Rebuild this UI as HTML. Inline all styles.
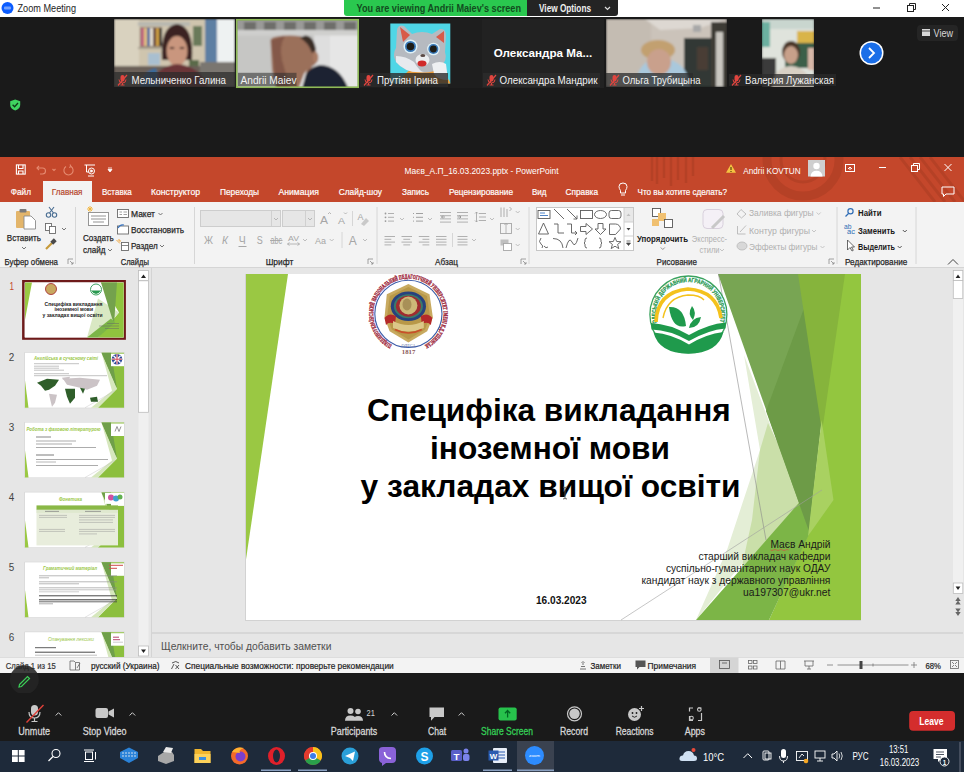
<!DOCTYPE html>
<html><head><meta charset="utf-8"><title>Zoom Meeting</title>
<style>
*{margin:0;padding:0}
html,body{width:964px;height:772px;overflow:hidden;background:#1a1a1a}
svg{display:block;font-family:"Liberation Sans",sans-serif}
</style></head><body>
<svg width="964" height="772" viewBox="0 0 964 772">
<rect x="0" y="0" width="964" height="772" fill="#1a1a1a"/>
<rect x="0" y="0" width="964" height="17" fill="#ffffff"/>
<circle cx="7.5" cy="8" r="6" fill="#0b5cff"/>
<rect x="4" y="6.5" width="7" height="3" rx="1" fill="#9fc0ff" opacity="0.7"/>
<text x="17.5" y="12" font-size="10.5" fill="#1d1d1d" textLength="58.5" lengthAdjust="spacingAndGlyphs">Zoom Meeting</text>
<path d="M344 0 H527 V16 H347 Q344 16 344 13 Z" fill="#2ac84f"/>
<text x="356.5" y="11.5" font-size="10" fill="#124d20" font-weight="bold" textLength="164.5" lengthAdjust="spacingAndGlyphs">You are viewing Andrii Maiev's screen</text>
<path d="M527 0 H618 V13 Q618 16 615 16 H527 Z" fill="#242424"/>
<text x="539" y="11.5" font-size="10" fill="#f0f0f0" font-weight="bold" textLength="52" lengthAdjust="spacingAndGlyphs">View Options</text>
<path d="M605 7 L607.5 9.5 L610 7" stroke="#ddd" stroke-width="1.2" fill="none"/>
<path d="M873 8 H880" stroke="#222" stroke-width="1"/>
<rect x="907.5" y="5.5" width="6" height="6" fill="none" stroke="#222" stroke-width="1"/><path d="M909.5 5.5 V3.5 H915.5 V9.5 H913.5" fill="none" stroke="#222" stroke-width="1"/>
<path d="M942 4 L949 11 M949 4 L942 11" stroke="#222" stroke-width="1"/>
<path d="M15.2 99.5 L20.2 101.3 V105 Q20.2 108.6 15.2 110.5 Q10.2 108.6 10.2 105 V101.3 Z" fill="#3fd460"/>
<path d="M12.6 104.8 L14.6 106.8 L18 103" stroke="#0f3a18" stroke-width="1.3" fill="none"/>
<defs><filter id="bl" x="-5%" y="-5%" width="110%" height="110%"><feGaussianBlur stdDeviation="1.3"/></filter><filter id="bl2"><feGaussianBlur stdDeviation="0.5"/></filter><clipPath id="c1"><rect x="114" y="19" width="121" height="68"/></clipPath><clipPath id="c2"><rect x="236" y="19" width="123" height="69"/></clipPath><clipPath id="c3"><rect x="390.3" y="23.5" width="60" height="60"/></clipPath><clipPath id="c5"><rect x="606" y="19" width="121" height="68"/></clipPath><clipPath id="c6"><rect x="762" y="19" width="52" height="68"/></clipPath></defs>
<g clip-path="url(#c1)"><g filter="url(#bl)"><rect x="114" y="19" width="121" height="68" fill="#cfc5ae"/><rect x="114" y="19" width="25" height="68" fill="#d9d2bf"/><rect x="138" y="22" width="52" height="4" fill="#b8b8b0"/><rect x="140" y="27" width="22" height="20" fill="#8a7a6a"/><rect x="141" y="28" width="3" height="18" fill="#c06080"/><rect x="144" y="28" width="3" height="18" fill="#e0c080"/><rect x="147" y="28" width="3" height="18" fill="#4a6aa0"/><rect x="150" y="28" width="3" height="18" fill="#e8e0d0"/><rect x="153" y="28" width="3" height="18" fill="#604040"/><rect x="156" y="28" width="3" height="18" fill="#d0a040"/><rect x="159" y="28" width="3" height="18" fill="#303030"/><rect x="138" y="47" width="55" height="2" fill="#a8a090"/><rect x="148" y="53" width="12" height="12" fill="#a9bfd0"/><rect x="205" y="19" width="12" height="60" fill="#5d7fa3"/><rect x="217" y="19" width="18" height="58" fill="#eef2f2"/><rect x="193" y="26" width="9" height="20" fill="#6a7a5a"/><rect x="189" y="60" width="10" height="12" fill="#5a6a4a"/><rect x="114" y="66" width="121" height="21" fill="#6a6058"/><rect x="200" y="62" width="35" height="25" fill="#7a7670"/><path d="M162 60 Q160 26 177 24 Q194 26 192 60 Z" fill="#3a2420"/><ellipse cx="177" cy="51" rx="10.5" ry="15" fill="#c9967e"/><path d="M150 87 Q156 66 177 64 Q200 66 208 87 Z" fill="#6a3438"/><path d="M140 87 Q144 70 156 68 L160 87 Z" fill="#3a6a9a"/><ellipse cx="172" cy="48" rx="2.5" ry="1" fill="#3a2420"/><ellipse cx="182" cy="48" rx="2.5" ry="1" fill="#3a2420"/></g></g>
<rect x="114" y="72" width="121" height="15" fill="#2b2b2b" opacity="0.72"/>
<g transform="translate(118,75)"><rect x="2.5" y="0" width="4" height="6.5" rx="2" fill="#e0453f"/><path d="M1 4.5 Q1 8 4.5 8 Q8 8 8 4.5 M4.5 8 V10 M2.5 10 H6.5" stroke="#e0453f" stroke-width="1" fill="none"/><path d="M0 10.5 L9 0" stroke="#e0453f" stroke-width="1.2"/></g>
<text x="131.5" y="84" font-size="10" fill="#f2f2f2" textLength="94.5" lengthAdjust="spacingAndGlyphs">Мельниченко Галина</text>
<g clip-path="url(#c2)"><g filter="url(#bl)"><rect x="236" y="19" width="123" height="69" fill="#c6c6c4"/><rect x="314" y="35" width="45" height="53" fill="#dedede"/><rect x="330" y="35" width="29" height="53" fill="#e6e6e6"/><rect x="236" y="19" width="123" height="12" fill="#9a9a98"/><rect x="244" y="22" width="12" height="8" fill="#6e6e6a"/><rect x="264" y="22" width="12" height="8" fill="#6e6e6a"/><rect x="284" y="22" width="12" height="8" fill="#6e6e6a"/><rect x="304" y="22" width="12" height="8" fill="#6e6e6a"/><rect x="324" y="22" width="12" height="8" fill="#6e6e6a"/><rect x="344" y="22" width="12" height="8" fill="#6e6e6a"/><rect x="236" y="30" width="123" height="5.5" fill="#cfcfcd"/><path d="M270.5 40 Q272 35.5 290 35.5 Q312 35.5 315 48 L317.5 56 Q318 64 312 66 L306 84 L298 88 L276 88 L272 70 Z" fill="#9b6f5a"/><path d="M271 40 L276 88 L290 88 L282 60 Q279 45 285 36 Z" fill="#7a5040" opacity="0.7"/><path d="M305 35.5 Q314 36 316 50 L312 53 Q308 42 300 38 Z" fill="#3a2e28"/><ellipse cx="315.5" cy="57.5" rx="2.8" ry="5" fill="#a87a62"/><path d="M300 88 Q304 68 320 65 Q340 66 348 88 Z" fill="#1f2432"/><path d="M304 74 L307 70 L302 88 L299 88 Z" fill="#e8e8e8"/></g></g>
<rect x="238" y="72.8" width="58.5" height="13.2" fill="#2b2b2b" opacity="0.55"/>
<rect x="236.75" y="19.75" width="121.5" height="67.5" fill="none" stroke="#8fba58" stroke-width="1.6"/>
<text x="240.5" y="84" font-size="10" fill="#f2f2f2" textLength="56" lengthAdjust="spacingAndGlyphs">Andrii Maiev</text>
<rect x="359" y="19" width="123" height="69" fill="#1e1e1e"/>
<rect x="390.3" y="23.5" width="60" height="60" fill="#4fd6e6"/>
<g clip-path="url(#c3)"><g filter="url(#bl2)"><path d="M400 84 Q404 68 422 67 Q444 68 451 84 Z" fill="#e89a3a"/><path d="M397 30 Q398 24 404 26 L412 34 Q422 30 432 34 L440 29 Q446 28 446 36 L445 52 Q448 60 440 68 Q430 74 420 72 Q404 72 396 62 Q392 54 396 48 Z" fill="#b6bac0"/><path d="M400 27 L410 35 L403 42 Z" fill="#d85a4a"/><path d="M444 31 L436 37 L444 43 Z" fill="#d85a4a"/><path d="M396 56 Q406 56 414 62 Q420 72 424 72 Q406 74 396 62 Z" fill="#e8eaee"/><path d="M432 64 Q440 60 446 64 L448 80 Q438 80 434 74 Z" fill="#eef0f2"/><ellipse cx="422.5" cy="60" rx="7" ry="6" fill="#eceef0"/><circle cx="410.5" cy="46.5" r="7" fill="#dff2f8"/><circle cx="410.5" cy="46.5" r="5.5" fill="#3a7ab8"/><circle cx="410.5" cy="46.5" r="3.8" fill="#1e1a16"/><circle cx="433.4" cy="49" r="6.3" fill="#dff2f8"/><circle cx="433.4" cy="49" r="5" fill="#3a7ab8"/><circle cx="433.4" cy="49" r="3.4" fill="#1e1a16"/><ellipse cx="422.8" cy="55.5" rx="2.5" ry="1.6" fill="#5a4a44"/><ellipse cx="422" cy="63.5" rx="4.5" ry="3" fill="#d02a2a"/></g></g>
<rect x="360" y="73" width="88" height="14" fill="#2b2b2b" opacity="0.8"/>
<g transform="translate(364,75)"><rect x="2.5" y="0" width="4" height="6.5" rx="2" fill="#e0453f"/><path d="M1 4.5 Q1 8 4.5 8 Q8 8 8 4.5 M4.5 8 V10 M2.5 10 H6.5" stroke="#e0453f" stroke-width="1" fill="none"/><path d="M0 10.5 L9 0" stroke="#e0453f" stroke-width="1.2"/></g>
<text x="377" y="84" font-size="10" fill="#f2f2f2" textLength="61" lengthAdjust="spacingAndGlyphs">Прутіян Ірина</text>
<rect x="482" y="19" width="122" height="69" fill="#222222"/>
<text x="493.7" y="57.2" font-size="10.8" fill="#ffffff" font-weight="bold" textLength="98.5" lengthAdjust="spacingAndGlyphs">Олександра  Ма...</text>
<rect x="483" y="73" width="117" height="14" fill="#2a2a2a"/>
<g transform="translate(487,75)"><rect x="2.5" y="0" width="4" height="6.5" rx="2" fill="#e0453f"/><path d="M1 4.5 Q1 8 4.5 8 Q8 8 8 4.5 M4.5 8 V10 M2.5 10 H6.5" stroke="#e0453f" stroke-width="1" fill="none"/><path d="M0 10.5 L9 0" stroke="#e0453f" stroke-width="1.2"/></g>
<text x="499.5" y="84" font-size="10" fill="#f2f2f2" textLength="98" lengthAdjust="spacingAndGlyphs">Олександра Мандрик</text>
<g clip-path="url(#c5)"><g filter="url(#bl)"><rect x="606" y="19" width="121" height="68" fill="#cbc3ba"/><rect x="606" y="19" width="45" height="68" fill="#c4bcb2"/><path d="M645 19 L660 30 L700 28 L727 19 Z" fill="#ddd8d2"/><rect x="684" y="38" width="27" height="49" fill="#323836"/><rect x="697" y="47" width="11" height="23" fill="#4a3e34"/><rect x="711" y="22" width="16" height="65" fill="#3e3a36"/><rect x="716" y="32" width="7" height="55" fill="#c9c6c0"/><rect x="693" y="25" width="8" height="7" fill="#a8a8a8"/><path d="M636 87 Q636 60 660 58 Q688 60 690 87 Z" fill="#a9c8dc"/><ellipse cx="658" cy="50" rx="17" ry="10" fill="#c2a070"/><ellipse cx="659" cy="62" rx="12" ry="13" fill="#c9a08c"/></g></g>
<rect x="606" y="73" width="87" height="14" fill="#2b2b2b" opacity="0.75"/>
<g transform="translate(610,75)"><rect x="2.5" y="0" width="4" height="6.5" rx="2" fill="#e0453f"/><path d="M1 4.5 Q1 8 4.5 8 Q8 8 8 4.5 M4.5 8 V10 M2.5 10 H6.5" stroke="#e0453f" stroke-width="1" fill="none"/><path d="M0 10.5 L9 0" stroke="#e0453f" stroke-width="1.2"/></g>
<text x="622.5" y="84" font-size="10" fill="#f2f2f2" textLength="78" lengthAdjust="spacingAndGlyphs">Ольга Трубицына</text>
<g clip-path="url(#c6)"><g filter="url(#bl)"><rect x="727" y="19" width="123" height="69" fill="#1f1f1f"/><rect x="762" y="19" width="52" height="68" fill="#dfe3dc"/><rect x="762" y="19" width="52" height="10" fill="#c9d6cf"/><rect x="762" y="22" width="8" height="25" fill="#6cb0a0"/><rect x="797" y="31" width="17" height="12" fill="#d9b44a"/><rect x="785" y="43" width="29" height="25" fill="#3b5f48"/><rect x="762" y="58" width="14" height="29" fill="#3a3a3a"/><ellipse cx="791" cy="52" rx="9" ry="11" fill="#4a3428"/><ellipse cx="791" cy="55" rx="7" ry="9" fill="#c8a08a"/><path d="M772 87 Q774 67 791 66 Q808 67 812 87 Z" fill="#d8d0c4"/><rect x="808" y="48" width="6" height="22" fill="#d8b8a8"/></g></g>
<rect x="729" y="74" width="107" height="12" fill="#2b2b2b" opacity="0.75"/>
<g transform="translate(732,75)"><rect x="2.5" y="0" width="4" height="6.5" rx="2" fill="#e0453f"/><path d="M1 4.5 Q1 8 4.5 8 Q8 8 8 4.5 M4.5 8 V10 M2.5 10 H6.5" stroke="#e0453f" stroke-width="1" fill="none"/><path d="M0 10.5 L9 0" stroke="#e0453f" stroke-width="1.2"/></g>
<text x="745" y="84" font-size="10" fill="#f2f2f2" textLength="89" lengthAdjust="spacingAndGlyphs">Валерия Лужанская</text>
<circle cx="871.5" cy="53" r="12" fill="#ffffff"/><circle cx="871.5" cy="53" r="10.5" fill="#1a6ee8"/>
<path d="M869 48 L874 53 L869 58" stroke="#fff" stroke-width="1.8" fill="none"/>
<rect x="917" y="25" width="41" height="16" rx="4" fill="#252525"/>
<rect x="922" y="29" width="8" height="7" fill="#d8d8d8"/><path d="M922 31 H930" stroke="#252525" stroke-width="0.8"/>
<text x="933.5" y="36.5" font-size="10" fill="#d8d8d8" textLength="19.5" lengthAdjust="spacingAndGlyphs">View</text>
<rect x="0" y="157" width="964" height="516" fill="#e6e6e6"/>
<rect x="0" y="157" width="964" height="45" fill="#c4472b"/>
<clipPath id="tbclip"><rect x="0" y="157" width="964" height="45"/></clipPath>
<g opacity="0.13" fill="none" stroke="#5a1a08" clip-path="url(#tbclip)"><path d="M652 157 V181 M657 157 V184 M664 157 V178 M671 157 V186 M678 157 V180 M686 157 V183 M693 157 V176" stroke-width="2.5"/><circle cx="803" cy="160" r="36" stroke-width="9"/><circle cx="803" cy="160" r="22" stroke-width="3"/><path d="M900 157 L935 202 M910 157 L945 202 M920 157 L955 202 M930 157 L965 202" stroke-width="3"/></g>
<g fill="none" stroke="#fff" stroke-width="1.1"><rect x="16.4" y="164.9" width="8.8" height="9.2"/><path d="M18.5 165 V168.5 H23 V165"/><path d="M18.5 174 V171 H23 V174"/></g>
<g fill="none" stroke="#e58a70" stroke-width="1.1"><path d="M37 168 H42.5 Q45.5 168 45.5 171 Q45.5 174 42.5 174 H40"/><path d="M39 166 L37 168 L39 170"/><path d="M52.5 169 L54 170.5 L55.5 169"/><path d="M71 166.5 A4.6 4.6 0 1 1 66 166.5"/><path d="M70 164.6 L71 166.5 L69.2 167.5"/></g>
<g fill="none" stroke="#fff" stroke-width="1"><path d="M84.5 165 H95"/><path d="M86.5 165 V172 H89"/><circle cx="91.5" cy="171" r="3"/><path d="M90.8 169.8 L92.8 171 L90.8 172.2Z" fill="#fff"/><path d="M88 176 H94"/></g>
<path d="M108 168 H112 M108 169.5 L110 172 L112 169.5 Z" stroke="#fff" stroke-width="0.8" fill="#fff"/>
<text x="404.5" y="173.5" font-size="9.5" fill="#ffffff" textLength="154" lengthAdjust="spacingAndGlyphs">Маєв_А.П_16.03.2023.pptx  -  PowerPoint</text>
<path d="M731 164 L736 172.7 H726 Z" fill="#f5c342"/><path d="M731 167 V170 M731 171 V172" stroke="#3a2a00" stroke-width="1"/>
<text x="743.3" y="173.5" font-size="9.5" fill="#ffffff" textLength="57.3" lengthAdjust="spacingAndGlyphs">Andrii KOVTUN</text>
<rect x="808" y="160" width="17" height="16.5" fill="#cfcfcf"/>
<circle cx="816.5" cy="166" r="3.2" fill="#fff"/><path d="M810.5 176.5 Q811 170.8 816.5 170.8 Q822 170.8 822.5 176.5 Z" fill="#fff"/>
<g fill="none" stroke="#fff" stroke-width="1"><rect x="845.5" y="164.5" width="9" height="7"/><path d="M848 169 L850 167 L852 169 M850 167 V170"/><path d="M879 167.5 H886"/><rect x="911.5" y="165.5" width="6" height="6"/><path d="M913.5 165.5 V163.5 H919.5 V169.5 H917.5"/><path d="M944.5 164 L951.5 171 M951.5 164 L944.5 171"/></g>
<rect x="43" y="181" width="49" height="21" fill="#f3f3f3"/>
<text x="10.8" y="195" font-size="9.5" fill="#ffffff" textLength="20.2" lengthAdjust="spacingAndGlyphs" stroke="#ffffff" stroke-width="0.2">Файл</text>
<text x="51.8" y="195" font-size="9.5" fill="#b5442a" textLength="30.7" lengthAdjust="spacingAndGlyphs" stroke="#b5442a" stroke-width="0.2">Главная</text>
<text x="102" y="195" font-size="9.5" fill="#ffffff" textLength="29.8" lengthAdjust="spacingAndGlyphs" stroke="#ffffff" stroke-width="0.2">Вставка</text>
<text x="151" y="195" font-size="9.5" fill="#ffffff" textLength="49" lengthAdjust="spacingAndGlyphs" stroke="#ffffff" stroke-width="0.2">Конструктор</text>
<text x="220" y="195" font-size="9.5" fill="#ffffff" textLength="39" lengthAdjust="spacingAndGlyphs" stroke="#ffffff" stroke-width="0.2">Переходы</text>
<text x="278.5" y="195" font-size="9.5" fill="#ffffff" textLength="40.5" lengthAdjust="spacingAndGlyphs" stroke="#ffffff" stroke-width="0.2">Анимация</text>
<text x="338.7" y="195" font-size="9.5" fill="#ffffff" textLength="43.3" lengthAdjust="spacingAndGlyphs" stroke="#ffffff" stroke-width="0.2">Слайд-шоу</text>
<text x="402" y="195" font-size="9.5" fill="#ffffff" textLength="27" lengthAdjust="spacingAndGlyphs" stroke="#ffffff" stroke-width="0.2">Запись</text>
<text x="449" y="195" font-size="9.5" fill="#ffffff" textLength="64" lengthAdjust="spacingAndGlyphs" stroke="#ffffff" stroke-width="0.2">Рецензирование</text>
<text x="532" y="195" font-size="9.5" fill="#ffffff" textLength="14.5" lengthAdjust="spacingAndGlyphs" stroke="#ffffff" stroke-width="0.2">Вид</text>
<text x="565.6" y="195" font-size="9.5" fill="#ffffff" textLength="32.4" lengthAdjust="spacingAndGlyphs" stroke="#ffffff" stroke-width="0.2">Справка</text>
<text x="637.6" y="195" font-size="9.5" fill="#ffffff" textLength="89.4" lengthAdjust="spacingAndGlyphs" stroke="#ffffff" stroke-width="0.2">Что вы хотите сделать?</text>
<g fill="none" stroke="#fff" stroke-width="1"><path d="M620.5 190.5 Q619 188.5 619 186.5 Q619 183 623 183 Q627 183 627 186.5 Q627 188.5 625.5 190.5 V193 H620.5 Z"/><path d="M621 195 H625"/></g>
<g fill="none" stroke="#fff" stroke-width="1"><path d="M942 187 H954 V194 H946 L943.5 196.5 V194 H942 Z"/></g>
<rect x="0" y="202" width="964" height="65.5" fill="#f3f3f3"/>
<rect x="0" y="267" width="964" height="1" fill="#d5d5d5"/>
<text x="4.6" y="265" font-size="9.5" fill="#262626" textLength="53.4" lengthAdjust="spacingAndGlyphs" stroke="#262626" stroke-width="0.25">Буфер обмена</text>
<text x="120.7" y="265" font-size="9.5" fill="#262626" textLength="28.3" lengthAdjust="spacingAndGlyphs" stroke="#262626" stroke-width="0.25">Слайды</text>
<text x="265.7" y="265" font-size="9.5" fill="#262626" textLength="27.6" lengthAdjust="spacingAndGlyphs" stroke="#262626" stroke-width="0.25">Шрифт</text>
<text x="435" y="265" font-size="9.5" fill="#262626" textLength="23" lengthAdjust="spacingAndGlyphs" stroke="#262626" stroke-width="0.25">Абзац</text>
<text x="656.6" y="265" font-size="9.5" fill="#262626" textLength="40.4" lengthAdjust="spacingAndGlyphs" stroke="#262626" stroke-width="0.25">Рисование</text>
<text x="845" y="265" font-size="9.5" fill="#262626" textLength="62.3" lengthAdjust="spacingAndGlyphs" stroke="#262626" stroke-width="0.25">Редактирование</text>
<g stroke="#8a8a8a" stroke-width="0.8" fill="none"><path d="M68 264 V259 H73"/><path d="M70 261 L73 264 M73 262 V264 H71"/></g>
<g stroke="#8a8a8a" stroke-width="0.8" fill="none"><path d="M368 264 V259 H373"/><path d="M370 261 L373 264 M373 262 V264 H371"/></g>
<g stroke="#8a8a8a" stroke-width="0.8" fill="none"><path d="M521 264 V259 H526"/><path d="M523 261 L526 264 M526 262 V264 H524"/></g>
<g stroke="#8a8a8a" stroke-width="0.8" fill="none"><path d="M829 264 V259 H834"/><path d="M831 261 L834 264 M834 262 V264 H832"/></g>
<path d="M75.5 207 V264" stroke="#d6d6d6" stroke-width="1"/>
<path d="M194.5 207 V264" stroke="#d6d6d6" stroke-width="1"/>
<path d="M377.0 207 V264" stroke="#d6d6d6" stroke-width="1"/>
<path d="M529.0 207 V264" stroke="#d6d6d6" stroke-width="1"/>
<path d="M837.0 207 V264" stroke="#d6d6d6" stroke-width="1"/>
<path d="M916.0 207 V264" stroke="#d6d6d6" stroke-width="1"/>
<path d="M948 264.5 L953 259.5 L958 264.5" stroke="#444" stroke-width="1" fill="none"/>
<rect x="16" y="211" width="14" height="17" rx="1" fill="#e3b56a"/>
<rect x="19.5" y="209" width="7" height="3.5" rx="1" fill="#7a7a7a"/>
<path d="M24 216 H31 L35.5 220.5 V229 H24 Z" fill="#fff" stroke="#8a8a8a" stroke-width="0.9"/>
<text x="6.8" y="241" font-size="9.5" fill="#262626" textLength="34.2" lengthAdjust="spacingAndGlyphs" stroke="#262626" stroke-width="0.25">Вставить</text>
<path d="M22 247 L24 249 L26 247" stroke="#666" stroke-width="0.9" fill="none"/>
<g stroke="#4a6e93" stroke-width="1.1" fill="none"><circle cx="48.5" cy="215" r="2.2"/><circle cx="54.5" cy="215" r="2.2"/><path d="M49.5 213 L54 207 M53.5 213 L49 207"/></g>
<g stroke="#6a6a6a" stroke-width="0.9" fill="#fff"><rect x="45.5" y="223.5" width="6" height="7"/><rect x="49.5" y="226.5" width="6" height="7"/></g>
<path d="M62 228 L64 230 L66 228" stroke="#666" stroke-width="0.9" fill="none"/>
<path d="M46 249 L52 243" stroke="#c69a3a" stroke-width="2.2"/><rect x="51" y="239.5" width="5" height="4" transform="rotate(-45 53.5 241.5)" fill="#4a4a4a"/>
<rect x="88.5" y="212.5" width="20" height="13" fill="#fff" stroke="#8a8a8a" stroke-width="0.9"/>
<path d="M91 216 H106 M91 219 H106 M93 222 H104" stroke="#b8b8b8" stroke-width="1.3"/>
<g stroke="#f2b233" stroke-width="0.9"><path d="M90 206 V212 M87 209 H93 M88 207 L92 211 M92 207 L88 211"/></g>
<text x="83" y="241" font-size="9.5" fill="#262626" textLength="30.7" lengthAdjust="spacingAndGlyphs" stroke="#262626" stroke-width="0.25">Создать</text>
<text x="83" y="252.5" font-size="9.5" fill="#262626" textLength="22.5" lengthAdjust="spacingAndGlyphs" stroke="#262626" stroke-width="0.25">слайд</text>
<path d="M108 249 L110 251 L112 249" stroke="#666" stroke-width="0.9" fill="none"/>
<rect x="117.5" y="209.5" width="11" height="8" fill="#fff" stroke="#6a6a6a" stroke-width="0.9"/><path d="M119.5 212 H122 M119.5 214.5 H122 M123.5 212 H127 M123.5 214.5 H127" stroke="#8a8a8a" stroke-width="0.8"/>
<text x="131" y="216.8" font-size="9.5" fill="#262626" textLength="24" lengthAdjust="spacingAndGlyphs" stroke="#262626" stroke-width="0.25">Макет</text>
<path d="M158.5 213 L160.5 215 L162.5 213" stroke="#666" stroke-width="0.9" fill="none"/>
<rect x="117.5" y="226" width="11" height="8" fill="#fff" stroke="#6a6a6a" stroke-width="0.9"/><path d="M118 228 Q120 224 124 225" stroke="#3b76c0" stroke-width="1.2" fill="none"/>
<text x="131" y="233.2" font-size="9.5" fill="#262626" textLength="53" lengthAdjust="spacingAndGlyphs" stroke="#262626" stroke-width="0.25">Восстановить</text>
<rect x="121.5" y="242.5" width="7" height="8" fill="#fff" stroke="#6a6a6a" stroke-width="0.9"/><path d="M121.5 245.5 H128.5" stroke="#6a6a6a" stroke-width="0.8"/><path d="M116.5 240 L120 243.5 M118 240 H120 V242" stroke="#f0a030" stroke-width="0.9" fill="none"/>
<text x="131" y="248.8" font-size="9.5" fill="#262626" textLength="26.7" lengthAdjust="spacingAndGlyphs" stroke="#262626" stroke-width="0.25">Раздел</text>
<path d="M160 245 L162 247 L164 245" stroke="#666" stroke-width="0.9" fill="none"/>
<rect x="200.5" y="210.5" width="80" height="16" fill="#e6e6e6" stroke="#cdcdcd" stroke-width="1"/>
<path d="M271.5 211 V226" stroke="#d0d0d0"/>
<path d="M274 218 L276 220 L278 218" stroke="#b0b0b0" stroke-width="0.9" fill="none"/>
<rect x="282.5" y="210.5" width="32" height="16" fill="#e6e6e6" stroke="#cdcdcd" stroke-width="1"/>
<path d="M305.5 211 V226" stroke="#d0d0d0"/>
<path d="M308 218 L310 220 L312 218" stroke="#b0b0b0" stroke-width="0.9" fill="none"/>
<text x="320" y="224" font-size="11" fill="#a6a6a6" textLength="8" lengthAdjust="spacingAndGlyphs">A</text>
<path d="M328 214 L329.5 212.5 L331 214" stroke="#a6a6a6" stroke-width="0.8" fill="none"/>
<text x="338" y="224" font-size="9" fill="#a6a6a6" textLength="7" lengthAdjust="spacingAndGlyphs">A</text>
<path d="M344 212.5 L345.5 214 L347 212.5" stroke="#a6a6a6" stroke-width="0.8" fill="none"/>
<path d="M352.5 211 V226" stroke="#d6d6d6" stroke-width="1"/>
<text x="357.6" y="220" font-size="9" fill="#a6a6a6" textLength="6" lengthAdjust="spacingAndGlyphs">A</text>
<path d="M361 224 L366 218 L369 221 L364 226 Z" fill="#c9c9c9"/>
<text x="204" y="244" font-size="10" fill="#a6a6a6" textLength="9" lengthAdjust="spacingAndGlyphs">Ж</text>
<text x="222" y="244" font-size="10" fill="#a6a6a6" textLength="6" lengthAdjust="spacingAndGlyphs" font-style="italic">К</text>
<text x="238.8" y="244" font-size="10" fill="#a6a6a6" textLength="7" lengthAdjust="spacingAndGlyphs">Ч</text>
<text x="256.8" y="244" font-size="10" fill="#a6a6a6" textLength="6" lengthAdjust="spacingAndGlyphs">S</text>
<text x="270.5" y="244" font-size="10" fill="#a6a6a6" textLength="11.5" lengthAdjust="spacingAndGlyphs">abc</text>
<path d="M238.5 246.5 H246.5" stroke="#a6a6a6"/>
<path d="M270 240.5 H282.5" stroke="#a6a6a6" stroke-width="0.9"/>
<text x="288" y="241" font-size="8" fill="#a6a6a6" textLength="11" lengthAdjust="spacingAndGlyphs">AV</text>
<path d="M287.5 244 H299.5 M289.5 242.5 L287.5 244 L289.5 245.5 M297.5 242.5 L299.5 244 L297.5 245.5" stroke="#a6a6a6" stroke-width="0.8" fill="none"/>
<path d="M303 239 L305 241 L307 239" stroke="#b8b8b8" stroke-width="0.9" fill="none"/>
<text x="315" y="244" font-size="9.5" fill="#a6a6a6" textLength="11" lengthAdjust="spacingAndGlyphs">Aa</text>
<path d="M329.7 239 L331.7 241 L333.7 239" stroke="#b8b8b8" stroke-width="0.9" fill="none"/>
<path d="M342.0 232 V248" stroke="#d6d6d6" stroke-width="1"/>
<text x="348.7" y="245" font-size="12" fill="#a6a6a6" textLength="8" lengthAdjust="spacingAndGlyphs">A</text>
<path d="M363 239 L365 241 L367 239" stroke="#b8b8b8" stroke-width="0.9" fill="none"/>
<circle cx="385.5" cy="213.5" r="0.9" fill="#9a9a9a"/><path d="M388 213.5 H394" stroke="#b0b0b0"/>
<circle cx="385.5" cy="217.3" r="0.9" fill="#9a9a9a"/><path d="M388 217.3 H394" stroke="#b0b0b0"/>
<circle cx="385.5" cy="221.1" r="0.9" fill="#9a9a9a"/><path d="M388 221.1 H394" stroke="#b0b0b0"/>
<path d="M400 218 L402 220 L404 218" stroke="#b8b8b8" stroke-width="0.9" fill="none"/>
<path d="M413 213.5 H414 M416 213.5 H423" stroke="#a0a0a0"/>
<path d="M413 217.3 H414 M416 217.3 H423" stroke="#a0a0a0"/>
<path d="M413 221.1 H414 M416 221.1 H423" stroke="#a0a0a0"/>
<path d="M428 218 L430 220 L432 218" stroke="#b8b8b8" stroke-width="0.9" fill="none"/>
<path d="M440 212.5 H451" stroke="#b0b0b0" stroke-width="1"/>
<path d="M440 215.7 H451" stroke="#b0b0b0" stroke-width="1"/>
<path d="M440 218.9 H451" stroke="#b0b0b0" stroke-width="1"/>
<path d="M440 222.1 H451" stroke="#b0b0b0" stroke-width="1"/>
<path d="M445 217 L441.5 217 M443 215.5 L441.5 217 L443 218.5" stroke="#8a8a8a" fill="none" stroke-width="0.8"/>
<path d="M457 212.5 H468" stroke="#b0b0b0" stroke-width="1"/>
<path d="M457 215.7 H468" stroke="#b0b0b0" stroke-width="1"/>
<path d="M457 218.9 H468" stroke="#b0b0b0" stroke-width="1"/>
<path d="M457 222.1 H468" stroke="#b0b0b0" stroke-width="1"/>
<path d="M457.5 217 L461 217 M459.5 215.5 L461 217 L459.5 218.5" stroke="#8a8a8a" fill="none" stroke-width="0.8"/>
<path d="M479 213.5 H486" stroke="#b0b0b0" stroke-width="1"/>
<path d="M479 217.0 H486" stroke="#b0b0b0" stroke-width="1"/>
<path d="M479 220.5 H486" stroke="#b0b0b0" stroke-width="1"/>
<path d="M476.5 212 V222 M475 213.5 L476.5 212 L478 213.5 M475 220.5 L476.5 222 L478 220.5" stroke="#a0a0a0" fill="none" stroke-width="0.8"/>
<path d="M490 218 L492 220 L494 218" stroke="#b8b8b8" stroke-width="0.9" fill="none"/>
<path d="M384.5 236.5 H395.0" stroke="#b0b0b0" stroke-width="1"/>
<path d="M384.5 239.3 H391.325" stroke="#b0b0b0" stroke-width="1"/>
<path d="M384.5 242.1 H395.0" stroke="#b0b0b0" stroke-width="1"/>
<path d="M384.5 244.9 H391.325" stroke="#b0b0b0" stroke-width="1"/>
<path d="M401.5 236.5 H412.0" stroke="#b0b0b0" stroke-width="1"/>
<path d="M403.3375 239.3 H410.16249999999997" stroke="#b0b0b0" stroke-width="1"/>
<path d="M401.5 242.1 H412.0" stroke="#b0b0b0" stroke-width="1"/>
<path d="M403.3375 244.9 H410.16249999999997" stroke="#b0b0b0" stroke-width="1"/>
<path d="M418.8 236.5 H429.3" stroke="#b0b0b0" stroke-width="1"/>
<path d="M422.475 239.3 H429.3" stroke="#b0b0b0" stroke-width="1"/>
<path d="M418.8 242.1 H429.3" stroke="#b0b0b0" stroke-width="1"/>
<path d="M422.475 244.9 H429.3" stroke="#b0b0b0" stroke-width="1"/>
<path d="M436 236.5 H446.5" stroke="#b0b0b0" stroke-width="1"/>
<path d="M436 239.3 H446.5" stroke="#b0b0b0" stroke-width="1"/>
<path d="M436 242.1 H446.5" stroke="#b0b0b0" stroke-width="1"/>
<path d="M436 244.9 H446.5" stroke="#b0b0b0" stroke-width="1"/>
<path d="M452.5 233 V247" stroke="#d6d6d6" stroke-width="1"/>
<path d="M457.5 236.5 H467.5" stroke="#b0b0b0" stroke-width="1"/>
<path d="M457.5 239.3 H467.5" stroke="#b0b0b0" stroke-width="1"/>
<path d="M457.5 242.1 H467.5" stroke="#b0b0b0" stroke-width="1"/>
<path d="M457.5 244.9 H467.5" stroke="#b0b0b0" stroke-width="1"/>
<path d="M472 239 L474 241 L476 239" stroke="#b8b8b8" stroke-width="0.9" fill="none"/>
<path d="M501 217 V207.5 M504 217 V207.5 M507 217 V209 M509.5 207 L511.5 209 L509.5 211" stroke="#a6a6a6" stroke-width="0.9" fill="none"/>
<path d="M515.7 211 L517.7 213 L519.7 211" stroke="#b8b8b8" stroke-width="0.9" fill="none"/>
<rect x="500.5" y="223.5" width="11" height="10" fill="none" stroke="#a6a6a6" stroke-width="0.9"/><path d="M506 223 V234 M504.5 225 L506 223 L507.5 225" stroke="#a6a6a6" stroke-width="0.8" fill="none"/>
<path d="M515.7 228 L517.7 230 L519.7 228" stroke="#b8b8b8" stroke-width="0.9" fill="none"/>
<rect x="500.5" y="239.5" width="8" height="6" fill="#c0c0c0"/><rect x="503.5" y="243.5" width="8" height="7" fill="#fff" stroke="#a6a6a6" stroke-width="0.9"/>
<path d="M515.7 244 L517.7 246 L519.7 244" stroke="#b8b8b8" stroke-width="0.9" fill="none"/>
<rect x="536.5" y="207.5" width="97" height="43" fill="#fff" stroke="#c6c6c6" stroke-width="1"/>
<rect x="624" y="208" width="9" height="14" fill="#e8e8e8"/>
<path d="M624 208 V250 M624 222 H633 M624 236 H633" stroke="#d0d0d0" stroke-width="1"/>
<path d="M626.5 216 L628.5 213.5 L630.5 216 Z" fill="#c0c0c0"/><path d="M626.5 228 L628.5 230.5 L630.5 228 Z" fill="#444"/><path d="M626.5 241 H630.5 M626.5 243 L628.5 245.5 L630.5 243 Z" stroke="#444" stroke-width="0.7" fill="#444"/>
<rect x="538" y="210.5" width="12" height="8" fill="none" stroke="#5a5a5a" stroke-width="0.9"/><path d="M540 213 H545 M540 215.5 H548" stroke="#3b76c0" stroke-width="0.9"/>
<path d="M554 209 L564 219" stroke="#5a5a5a" stroke-width="0.9"/>
<path d="M567 209 L577 219 M577 215.5 V219 H573.5" stroke="#5a5a5a" stroke-width="0.9" fill="none"/>
<rect x="580.5" y="210.5" width="12" height="8" fill="none" stroke="#5a5a5a" stroke-width="0.9"/>
<ellipse cx="600.5" cy="214.5" rx="6" ry="4" fill="none" stroke="#5a5a5a" stroke-width="0.9"/>
<rect x="609" y="210.5" width="12" height="8" rx="2.5" fill="none" stroke="#5a5a5a" stroke-width="0.9"/>
<path d="M543.5 223 L538.5 234 H548.5 Z" fill="none" stroke="#5a5a5a" stroke-width="0.9"/>
<path d="M554 224 H558 V233 H564" fill="none" stroke="#5a5a5a" stroke-width="0.9"/>
<path d="M567 224 H571.5 V233 H577 M575 231 L577 233 L575 235" fill="none" stroke="#5a5a5a" stroke-width="0.9"/>
<path d="M580.5 226.5 H586 V223.5 L592.5 229 L586 234.5 V231.5 H580.5 Z" fill="none" stroke="#5a5a5a" stroke-width="0.9"/>
<path d="M598 223.5 H603 V229 H606 L600.5 234.5 L595 229 H598 Z" fill="none" stroke="#5a5a5a" stroke-width="0.9"/>
<path d="M609.5 234.5 V224 H615.5 A5 5 0 0 1 620.5 229 L615.5 234.5 Z" fill="none" stroke="#5a5a5a" stroke-width="0.9"/>
<path d="M541 238 Q538 242 541 244 Q544 246 542 248 M544 246 Q546 249 548 247" fill="none" stroke="#5a5a5a" stroke-width="0.9"/>
<path d="M553 238.5 Q562 238.5 563 248" fill="none" stroke="#5a5a5a" stroke-width="0.9"/>
<path d="M566 248 Q569 236 572 242 Q575 249 578 238" fill="none" stroke="#5a5a5a" stroke-width="0.9"/>
<path d="M587 238 Q585 238 585 240 V242 L584 243 L585 244 V246 Q585 248 587 248" fill="none" stroke="#5a5a5a" stroke-width="0.9"/>
<path d="M599 238 Q601 238 601 240 V242 L602 243 L601 244 V246 Q601 248 599 248" fill="none" stroke="#5a5a5a" stroke-width="0.9"/>
<path d="M615 237.5 L616.7 241.5 L621 241.7 L617.6 244.4 L618.8 248.6 L615 246.2 L611.2 248.6 L612.4 244.4 L609 241.7 L613.3 241.5 Z" fill="none" stroke="#5a5a5a" stroke-width="0.9"/>
<rect x="652.5" y="208.5" width="8" height="8" fill="#fff" stroke="#555" stroke-width="0.9"/><rect x="658" y="213" width="8" height="8" fill="#f0c070"/><rect x="664.5" y="219.5" width="8" height="8" fill="#fff" stroke="#555" stroke-width="0.9"/><rect x="652" y="219" width="7" height="7" fill="#f0c070"/>
<text x="637" y="242" font-size="9.5" fill="#1a1a1a" font-weight="bold" textLength="51" lengthAdjust="spacingAndGlyphs">Упорядочить</text>
<path d="M660.8 247.5 L662.8 249.5 L664.8 247.5" stroke="#888" stroke-width="0.9" fill="none"/>
<rect x="703" y="209.5" width="20" height="19" rx="4" fill="#f4f0f6" stroke="#d8d0dc" stroke-width="1"/><path d="M712 228 L724 216" stroke="#c8c8c8" stroke-width="3"/>
<text x="691.8" y="242" font-size="9.5" fill="#b0b0b0" textLength="35.2" lengthAdjust="spacingAndGlyphs">Экспресс-</text>
<text x="699.5" y="252.8" font-size="9.5" fill="#b0b0b0" textLength="20" lengthAdjust="spacingAndGlyphs">стили</text>
<path d="M720 249 L722 251 L724 249" stroke="#c0c0c0" stroke-width="0.9" fill="none"/>
<path d="M737 214 L741 209.5 L746 214 L741.5 218 Z" fill="none" stroke="#b8b8b8" stroke-width="0.9"/>
<text x="749" y="216.3" font-size="9.5" fill="#b0b0b0" textLength="64.6" lengthAdjust="spacingAndGlyphs">Заливка фигуры</text>
<path d="M816.7 212.5 L818.7 214.5 L820.7 212.5" stroke="#c0c0c0" stroke-width="0.9" fill="none"/>
<path d="M737.5 226 V234 H745.5 M740 232 L746 225.5" fill="none" stroke="#b8b8b8" stroke-width="0.9"/>
<text x="749" y="233.5" font-size="9.5" fill="#b0b0b0" textLength="61" lengthAdjust="spacingAndGlyphs">Контур фигуры</text>
<path d="M812 230 L814 232 L816 230" stroke="#c0c0c0" stroke-width="0.9" fill="none"/>
<ellipse cx="742" cy="246" rx="5" ry="4" fill="#d8d8d8" stroke="#b8b8b8" stroke-width="0.8"/>
<text x="749" y="249.8" font-size="9.5" fill="#b0b0b0" textLength="68.4" lengthAdjust="spacingAndGlyphs">Эффекты фигуры</text>
<path d="M820.5 246 L822.5 248 L824.5 246" stroke="#c0c0c0" stroke-width="0.9" fill="none"/>
<g stroke="#2f6db5" stroke-width="1.2" fill="none"><circle cx="850.5" cy="211.3" r="2.6"/><path d="M848.5 213.5 L845.5 216.5"/></g>
<text x="858" y="216.3" font-size="9.5" fill="#1a1a1a" font-weight="bold" textLength="23.5" lengthAdjust="spacingAndGlyphs">Найти</text>
<text x="844" y="228.5" font-size="6.5" fill="#2f6db5" textLength="7.5" lengthAdjust="spacingAndGlyphs">ab</text>
<text x="847" y="234" font-size="6.5" fill="#2f6db5" textLength="8" lengthAdjust="spacingAndGlyphs">ac</text>
<text x="858" y="233.5" font-size="9.5" fill="#1a1a1a" font-weight="bold" textLength="37" lengthAdjust="spacingAndGlyphs">Заменить</text>
<path d="M902.8 230 L904.8 232 L906.8 230" stroke="#444" stroke-width="0.9" fill="none"/>
<path d="M847.5 240 V250 L850 247.5 L852 251 L853.3 250.3 L851.5 247 L854.5 247 Z" fill="#fff" stroke="#444" stroke-width="0.8"/>
<text x="858" y="249.8" font-size="9.5" fill="#1a1a1a" font-weight="bold" textLength="37" lengthAdjust="spacingAndGlyphs">Выделить</text>
<path d="M897.7 246 L899.7 248 L901.7 246" stroke="#444" stroke-width="0.9" fill="none"/>
<rect x="245" y="274" width="1" height="347" fill="#d2d2d2"/>
<rect x="245" y="620" width="616" height="1" fill="#d2d2d2"/>
<rect x="246" y="274" width="615" height="346" fill="#ffffff"/>
<polygon points="246,274 288,274 246,559.5" fill="#9ac843"/>
<polygon points="798,274 861,274 861,620 769,620 810,531 822,432" fill="#93c63f"/>
<polygon points="744,355 797,496 696,620 727,550 760,450" fill="#e4eed6"/>
<polygon points="768,423 805,500 740,575 752,520 760,450" fill="#cadfa9"/>
<polygon points="696,620 769,620 812,528 805,496" fill="#7cb547"/>
<polygon points="718,274 838,274 809,531" fill="#78a553"/>
<polygon points="816.7,274 838,274 809,531 766,411" fill="#6d9b47"/>
<polygon points="798,274 845,274 822,432" fill="#86b43c"/>
<polygon points="821.6,420 833.5,500 808,536" fill="#a9d161"/>
<path d="M718.5 274 L766 540" stroke="#8a8a8a" stroke-width="0.6" fill="none"/>
<path d="M621 620 L822 490" stroke="#a0a0a0" stroke-width="0.6" fill="none"/>
<text x="367" y="420.5" font-size="32" fill="#000000" font-weight="bold" textLength="363.7" lengthAdjust="spacingAndGlyphs">Специфіка викладання</text>
<text x="430" y="458.5" font-size="32" fill="#000000" font-weight="bold" textLength="240" lengthAdjust="spacingAndGlyphs">іноземної мови</text>
<text x="360.6" y="497" font-size="32" fill="#000000" font-weight="bold" textLength="380" lengthAdjust="spacingAndGlyphs">у закладах вищої освіти</text>
<text x="830.4" y="547.5" font-size="11.8" fill="#1a1a1a" text-anchor="end" textLength="60" lengthAdjust="spacingAndGlyphs">Маєв Андрій</text>
<text x="830.4" y="559.8" font-size="11.8" fill="#1a1a1a" text-anchor="end" textLength="132" lengthAdjust="spacingAndGlyphs">старший викладач кафедри</text>
<text x="830.4" y="572" font-size="11.8" fill="#1a1a1a" text-anchor="end" textLength="164.5" lengthAdjust="spacingAndGlyphs">суспільно-гуманітарних наук ОДАУ</text>
<text x="830.4" y="584" font-size="11.8" fill="#1a1a1a" text-anchor="end" textLength="189" lengthAdjust="spacingAndGlyphs">кандидат наук з державного управління</text>
<text x="830.4" y="596" font-size="11.8" fill="#1a1a1a" text-anchor="end" textLength="87.5" lengthAdjust="spacingAndGlyphs">ua197307@ukr.net</text>
<path d="M770.5 550 Q772 551 773.5 550 T776.5 550 T779.5 550 T782.5 550 T785.5 550 T788.5 550" stroke="#e04040" stroke-width="0.6" fill="none"/>
<text x="536" y="604" font-size="10" fill="#111" font-weight="bold" textLength="50.5" lengthAdjust="spacingAndGlyphs">16.03.2023</text>
<path d="M563 487 Q565 488 567 487 M565 488 V498 M563 499 Q565 498 567 499" stroke="#555" stroke-width="0.9" fill="none"/>
<defs><path id="sealarc" d="M391.87 344.88 A35.2 35.2 0 1 1 424.93 344.88" fill="none"/><path id="agrarc" d="M657.01 322.91 A32.5 32.5 0 1 1 719.79 322.91" fill="none"/></defs>
<text font-size="6.2" font-weight="bold" fill="#9a2035" stroke="#9a2035" stroke-width="0.35" font-family="Liberation Serif"><textPath href="#sealarc" textLength="195" lengthAdjust="spacingAndGlyphs">ПІВДЕННОУКРАЇНСЬКИЙ НАЦІОНАЛЬНИЙ ПЕДАГОГІЧНИЙ УНІВЕРСИТЕТ ІМЕНІ К.Д.УШИНСЬКОГО</textPath></text>
<circle cx="408.4" cy="313.8" r="33.6" fill="none" stroke="#3a5aa8" stroke-width="1.1"/>
<polygon points="408.4,284 429.5,294.2 432.9,317.6 427.2,331.2 408.4,342.6 389.6,331.2 384.5,317.6 386.8,294.2" fill="#c8aa60"/>
<polygon points="408.4,287 427,296 430,317 425,329.5 408.4,339.5 391.8,329.5 387,317 389.8,296" fill="#b89848"/>
<ellipse cx="408.4" cy="306.2" rx="17.6" ry="14.8" fill="#27427e"/>
<ellipse cx="408.4" cy="306.2" rx="14.5" ry="12" fill="#3b7a6a"/>
<ellipse cx="408.4" cy="306.2" rx="12.5" ry="10.5" fill="#a02c30"/>
<ellipse cx="408.4" cy="305.5" rx="9" ry="9" fill="#cdb878"/>
<ellipse cx="407" cy="304.5" rx="4.5" ry="6" fill="#a89058"/>
<path d="M384.5 318 Q389 312 396 316 L395 324 Q389 321 386 325 Z" fill="#b42a2a"/>
<path d="M432.3 318 Q427.8 312 420.8 316 L421.8 324 Q427.8 321 430.8 325 Z" fill="#b42a2a"/>
<path d="M393 321 Q408.4 329 423.8 321 L423.8 328 Q408.4 335 393 328 Z" fill="#dcc888"/>
<path d="M395 329.5 Q408.4 336.5 421.8 329.5" stroke="#c8502a" stroke-width="1.6" fill="none"/>
<text x="401.5" y="346.8" font-size="3.8" fill="#5a6a9a" font-family="Liberation Serif" textLength="14" lengthAdjust="spacingAndGlyphs">ОДЕСА</text>
<text x="401.8" y="353.6" font-size="6.5" font-family="Liberation Serif" font-weight="bold" fill="#8a5a5a" textLength="13.5" lengthAdjust="spacingAndGlyphs">1817</text>
<circle cx="688.4" cy="314.5" r="38.5" fill="#fff" stroke="#3aa25e" stroke-width="1.3"/>
<text font-size="6" font-weight="bold" fill="#2a9a55" stroke="#2a9a55" stroke-width="0.3"><textPath href="#agrarc" textLength="118" lengthAdjust="spacingAndGlyphs">ОДЕСЬКИЙ ДЕРЖАВНИЙ АГРАРНИЙ УНІВЕРСИТЕТ</textPath></text>
<path d="M656 322 Q657 292 688 289 Q717 291 721 318" stroke="#f4c21c" stroke-width="3.6" fill="none"/>
<path d="M663 318 Q667 297 688 295 Q700 295 704 300" stroke="#f4c21c" stroke-width="1.4" fill="none"/>
<path d="M669 307 Q684 306 686 326 Q672 330 669 307 Z" fill="#1f9a4c"/>
<path d="M692 306 Q697 312 693 320 Q687 314 692 306 Z" fill="#1f9a4c"/>
<path d="M689 328 Q691 318 701 317 Q699 328 689 328 Z" fill="#1f9a4c"/>
<path d="M651 323 Q670 324 689 335 Q708 324 726 322.5 L725.5 328.5 Q708 330 689 341 Q670 330 651.5 329.5 Z" fill="#1f9a4c"/>
<path d="M653.5 332.5 Q672 334 689 344.5 Q706 334 723.5 332 Q718 353.5 688.4 353.5 Q659 353.5 653.5 332.5 Z" fill="#1f9a4c"/>
<rect x="0" y="268" width="151" height="389" fill="#e6e6e6"/>
<rect x="151" y="268" width="1" height="389" fill="#d4d4d4"/>
<rect x="138.5" y="270.5" width="10" height="386" fill="#f0f0f0"/>
<rect x="138.5" y="270.5" width="10" height="10" fill="#fff" stroke="#bcbcbc" stroke-width="0.8"/>
<path d="M141 278 L143.5 274.5 L146 278 Z" fill="#222"/>
<rect x="138.5" y="280.8" width="10" height="131.5" fill="#fff" stroke="#bcbcbc" stroke-width="0.8"/>
<rect x="138.5" y="646" width="10" height="10" fill="#fff" stroke="#bcbcbc" stroke-width="0.8"/>
<path d="M141 649.5 L143.5 653 L146 649.5 Z" fill="#222"/>
<rect x="23.3" y="281.2" width="101.4" height="57.4" fill="none" stroke="#6e1a1a" stroke-width="2.4"/>
<rect x="25" y="282.5" width="98.7" height="55" fill="#ffffff"/>
<polygon points="25,282.5 32,282.5 25,319.5" fill="#9ac843"/>
<polygon points="101,282.5 123.7,282.5 123.7,337.5 98,337.5 119,312.5" fill="#90c43e"/>
<polygon points="98,298.5 119,312.5 98,337.5 87,337.5" fill="#d9e8c3"/>
<polygon points="101,282.5 117,282.5 114,324.5" fill="#74a24d"/>
<polygon points="87,337.5 98,337.5 115,322.5 111,318.5" fill="#7cb547"/>
<circle cx="51" cy="289.0" r="5.5" fill="#c8a860" stroke="#a33" stroke-width="0.9"/>
<circle cx="96" cy="289.5" r="5.5" fill="#fff" stroke="#2a9a50" stroke-width="0.9"/><path d="M91 290.5 Q96 297.5 101 290.5" fill="#2a9a50"/>
<text x="44.5" y="306.0" font-size="5.2" fill="#222" font-weight="bold" textLength="58" lengthAdjust="spacingAndGlyphs">Специфіка викладання</text>
<text x="54.5" y="311.3" font-size="5.2" fill="#222" font-weight="bold" textLength="38.5" lengthAdjust="spacingAndGlyphs">іноземної мови</text>
<text x="42.5" y="316.5" font-size="5.2" fill="#222" font-weight="bold" textLength="60" lengthAdjust="spacingAndGlyphs">у закладах вищої освіти</text>
<path d="M107 323.5 H119 M99 326.0 H119 M105 328.5 H119" stroke="#666" stroke-width="0.5"/>
<text x="9.5" y="290" font-size="10" fill="#c4472b" textLength="4.5" lengthAdjust="spacingAndGlyphs">1</text>
<text x="8.8" y="361" font-size="10" fill="#444" textLength="5.5" lengthAdjust="spacingAndGlyphs">2</text>
<text x="8.8" y="431" font-size="10" fill="#444" textLength="5.5" lengthAdjust="spacingAndGlyphs">3</text>
<text x="8.8" y="501" font-size="10" fill="#444" textLength="5.5" lengthAdjust="spacingAndGlyphs">4</text>
<text x="8.8" y="571" font-size="10" fill="#444" textLength="5.5" lengthAdjust="spacingAndGlyphs">5</text>
<text x="8.8" y="641" font-size="10" fill="#444" textLength="5.5" lengthAdjust="spacingAndGlyphs">6</text>
<rect x="24.5" y="352.2" width="100" height="56" fill="#d0d0d0"/>
<rect x="25" y="352.7" width="99" height="55" fill="#ffffff"/>
<polygon points="25,380.7 28.5,407.7 25,407.7" fill="#9ac843"/>
<polygon points="101.5,352.7 124,352.7 124,407.7 98,407.7 117,388.7" fill="#8cbf3e"/>
<polygon points="101.5,352.7 117,388.7 98,407.7 91,407.7 112,390.7" fill="#d6e7bd"/>
<polygon points="101.5,352.7 111,352.7 117,388.7" fill="#6f9f4a"/>
<path d="M85 407.7 L115 390.7" stroke="#bbb" stroke-width="0.4"/>
<rect x="111" y="353.7" width="13" height="12.5" fill="#ffffff"/>
<rect x="24.5" y="422.0" width="100" height="56" fill="#d0d0d0"/>
<rect x="25" y="422.5" width="99" height="55" fill="#ffffff"/>
<polygon points="25,450.5 28.5,477.5 25,477.5" fill="#9ac843"/>
<polygon points="101.5,422.5 124,422.5 124,477.5 98,477.5 117,458.5" fill="#8cbf3e"/>
<polygon points="101.5,422.5 117,458.5 98,477.5 91,477.5 112,460.5" fill="#d6e7bd"/>
<polygon points="101.5,422.5 111,422.5 117,458.5" fill="#6f9f4a"/>
<path d="M85 477.5 L115 460.5" stroke="#bbb" stroke-width="0.4"/>
<rect x="111" y="423.5" width="13" height="12.5" fill="#ffffff"/>
<rect x="24.5" y="491.9" width="100" height="56" fill="#d0d0d0"/>
<rect x="25" y="492.4" width="99" height="55" fill="#ffffff"/>
<polygon points="25,520.4 28.5,547.4 25,547.4" fill="#9ac843"/>
<polygon points="101.5,492.4 124,492.4 124,547.4 98,547.4 117,528.4" fill="#8cbf3e"/>
<polygon points="101.5,492.4 117,528.4 98,547.4 91,547.4 112,530.4" fill="#d6e7bd"/>
<polygon points="101.5,492.4 111,492.4 117,528.4" fill="#6f9f4a"/>
<path d="M85 547.4 L115 530.4" stroke="#bbb" stroke-width="0.4"/>
<rect x="111" y="493.4" width="13" height="12.5" fill="#ffffff"/>
<rect x="24.5" y="561.8" width="100" height="56" fill="#d0d0d0"/>
<rect x="25" y="562.3" width="99" height="55" fill="#ffffff"/>
<polygon points="25,590.3 28.5,617.3 25,617.3" fill="#9ac843"/>
<polygon points="101.5,562.3 124,562.3 124,617.3 98,617.3 117,598.3" fill="#8cbf3e"/>
<polygon points="101.5,562.3 117,598.3 98,617.3 91,617.3 112,600.3" fill="#d6e7bd"/>
<polygon points="101.5,562.3 111,562.3 117,598.3" fill="#6f9f4a"/>
<path d="M85 617.3 L115 600.3" stroke="#bbb" stroke-width="0.4"/>
<rect x="111" y="563.3" width="13" height="12.5" fill="#ffffff"/>
<rect x="24.5" y="631.7" width="100" height="56" fill="#d0d0d0"/>
<rect x="25" y="632.2" width="99" height="55" fill="#ffffff"/>
<polygon points="25,660.2 28.5,687.2 25,687.2" fill="#9ac843"/>
<polygon points="101.5,632.2 124,632.2 124,687.2 98,687.2 117,668.2" fill="#8cbf3e"/>
<polygon points="101.5,632.2 117,668.2 98,687.2 91,687.2 112,670.2" fill="#d6e7bd"/>
<polygon points="101.5,632.2 111,632.2 117,668.2" fill="#6f9f4a"/>
<path d="M85 687.2 L115 670.2" stroke="#bbb" stroke-width="0.4"/>
<rect x="111" y="633.2" width="13" height="12.5" fill="#ffffff"/>
<text x="34" y="360.2" font-size="5.8" fill="#9cc84a" font-weight="bold" textLength="64" lengthAdjust="spacingAndGlyphs" font-style="italic">Англійська в сучасному світі</text>
<path d="M34 363.7 H79" stroke="#9a9a9a" stroke-width="0.6"/>
<path d="M34 366.2 H59" stroke="#9a9a9a" stroke-width="0.6"/>
<path d="M34 368.2 H59" stroke="#9a9a9a" stroke-width="0.6"/>
<path d="M34 370.2 H64" stroke="#9a9a9a" stroke-width="0.6"/>
<path d="M34 373.7 H69" stroke="#9a9a9a" stroke-width="0.6"/>
<path d="M34 375.7 H107" stroke="#9a9a9a" stroke-width="0.6"/>
<polygon points="63,378.7 80,377.7 100,379.7 97,385.7 87,389.7 80,387.7 67,384.7" fill="#cbc3c6"/>
<polygon points="62,377.7 70,376.7 69,379.7 63,379.7" fill="#cbc3c6"/>
<polygon points="37,382.7 47,378.7 59,379.7 55,385.7 49,389.7 45,390.7 41,385.7" fill="#2f5e2a"/>
<polygon points="49,393.7 57,394.7 55,402.7 52,406.7 50,398.7" fill="#cbc3c6"/>
<polygon points="65,388.7 75,388.7 75,397.7 70,403.7 67,396.7" fill="#2f5e2a"/>
<polygon points="80,387.7 85,388.7 83,393.7" fill="#2f5e2a"/>
<polygon points="90,397.7 97,396.7 98,401.7 91,401.7" fill="#2f5e2a"/>
<circle cx="117" cy="359.2" r="5.3" fill="#2a4a9a"/><path d="M112 359.2 H122 M117 354.2 V364.2 M113.5 355.7 L120.5 362.7 M120.5 355.7 L113.5 362.7" stroke="#fff" stroke-width="1.3"/><path d="M112 359.2 H122 M117 354.2 V364.2" stroke="#d02a3a" stroke-width="0.8"/>
<text x="26.5" y="430.5" font-size="5.8" fill="#9cc84a" font-weight="bold" textLength="74" lengthAdjust="spacingAndGlyphs" font-style="italic">Робота з фаховою літературою</text>
<path d="M36 437.0 H51" stroke="#555" stroke-width="0.7"/>
<path d="M36 441.0 H76" stroke="#888" stroke-width="0.7"/>
<path d="M36 444.0 H72" stroke="#888" stroke-width="0.7"/>
<path d="M36 447.5 H96" stroke="#888" stroke-width="0.7"/>
<path d="M36 455.0 H54" stroke="#444" stroke-width="0.7"/>
<path d="M36 459.5 H108" stroke="#888" stroke-width="0.7"/>
<path d="M36 462.0 H56" stroke="#999" stroke-width="0.7"/>
<path d="M36 465.5 H98" stroke="#888" stroke-width="0.7"/>
<path d="M115 431.5 L117 426.5 L119 431.5 L121 426.5" stroke="#666" stroke-width="0.7" fill="none"/>
<text x="59" y="501.4" font-size="5.5" fill="#9cc84a" font-weight="bold" textLength="23" lengthAdjust="spacingAndGlyphs" font-style="italic">Фонетика</text>
<rect x="36.5" y="505.4" width="81.5" height="4.5" fill="#8ab846"/>
<rect x="36.5" y="509.9" width="81.5" height="35.5" fill="#e8eddc"/>
<rect x="36.5" y="509.9" width="81.5" height="3" fill="#dfe8cf"/>
<path d="M45 511.4 H59 M85 511.4 H101" stroke="#888" stroke-width="0.5"/>
<path d="M45 511.4 H59 M85 511.4 H101" stroke="#888" stroke-width="0.5"/>
<path d="M39 515.4 H67 M79 515.4 H115" stroke="#999" stroke-width="0.5"/>
<path d="M39 517.4 H67 M79 517.4 H115" stroke="#999" stroke-width="0.5"/>
<path d="M79 519.9 H113" stroke="#999" stroke-width="0.5"/>
<path d="M79 522.4 H113" stroke="#999" stroke-width="0.5"/>
<path d="M39 529.4 H65 M79 529.4 H115" stroke="#999" stroke-width="0.5"/>
<path d="M39 531.4 H65 M79 531.4 H115" stroke="#999" stroke-width="0.5"/>
<path d="M79 533.9 H97" stroke="#999" stroke-width="0.5"/>
<rect x="105" y="492.9" width="19" height="11" fill="#ffffff"/>
<circle cx="111" cy="497.4" r="3" fill="#d050a0"/><circle cx="116" cy="498.4" r="3" fill="#40a0d0"/><circle cx="120" cy="496.9" r="2.5" fill="#60b050"/>
<text x="43" y="570.3" font-size="5.5" fill="#9cc84a" font-weight="bold" textLength="54" lengthAdjust="spacingAndGlyphs" font-style="italic">Граматичний матеріал</text>
<path d="M39 575.8 H117" stroke="#888" stroke-width="0.6"/>
<path d="M39 577.8 H49" stroke="#888" stroke-width="0.6"/>
<path d="M39 581.8 H117" stroke="#888" stroke-width="0.6"/>
<path d="M39 583.8 H79" stroke="#888" stroke-width="0.6"/>
<path d="M39 587.8 H117" stroke="#888" stroke-width="0.6"/>
<path d="M39 589.8 H117" stroke="#999" stroke-width="0.6"/>
<path d="M39 591.8 H79" stroke="#aaa" stroke-width="0.6"/>
<path d="M39 595.8 H117" stroke="#333" stroke-width="0.9"/>
<path d="M39 599.8 H117" stroke="#222" stroke-width="0.9"/>
<path d="M39 601.8 H117" stroke="#444" stroke-width="0.8"/>
<path d="M39 603.8 H53" stroke="#777" stroke-width="0.6"/>
<path d="M109 565.3 H123 M109 568.3 H117" stroke="#d04a4a" stroke-width="1"/>
<text x="48" y="641.2" font-size="5.8" fill="#9cc84a" textLength="46" lengthAdjust="spacingAndGlyphs" font-style="italic">Опанування лексики</text>
<path d="M35 647.7 H56" stroke="#333" stroke-width="0.8"/><path d="M35 652.2 H95" stroke="#333" stroke-width="0.9"/><path d="M35 655.2 H97" stroke="#999" stroke-width="0.6"/>
<path d="M113 637.2 H119 M113 639.7 H120" stroke="#b03060" stroke-width="0.9"/><path d="M113 642.2 H123" stroke="#aaa" stroke-width="0.6"/>
<rect x="953" y="270.5" width="10" height="323" fill="#f0f0f0"/>
<rect x="953.3" y="270.5" width="9.5" height="10" fill="#fff" stroke="#bcbcbc" stroke-width="0.8"/>
<path d="M955.6 278 L958 274.5 L960.4 278 Z" fill="#222"/>
<rect x="953.3" y="280.5" width="9.5" height="18" fill="#fff" stroke="#bcbcbc" stroke-width="0.8"/>
<rect x="953.3" y="583" width="9.5" height="10.5" fill="#fff" stroke="#bcbcbc" stroke-width="0.8"/>
<path d="M955.6 586.5 L958 590 L960.4 586.5 Z" fill="#222"/>
<path d="M955.3 601 L958 597 L960.7 601 Z M955.3 604.5 L958 600.5 L960.7 604.5 Z" fill="#666"/>
<path d="M955.3 608.5 L958 612.5 L960.7 608.5 Z M955.3 612 L958 616 L960.7 612 Z" fill="#666"/>
<rect x="152" y="632.5" width="811" height="1" fill="#c8c8c8"/>
<text x="161" y="649.5" font-size="11" fill="#505050" textLength="170.4" lengthAdjust="spacingAndGlyphs">Щелкните, чтобы добавить заметки</text>
<rect x="0" y="657" width="964" height="16" fill="#f3f3f3"/>
<rect x="0" y="657" width="964" height="0.8" fill="#d8d8d8"/>
<text x="5.7" y="668.5" font-size="9" fill="#333" textLength="50" lengthAdjust="spacingAndGlyphs" stroke="#333" stroke-width="0.2">Слайд 1 из 15</text>
<path d="M70 661 H74 L75.5 662.5 V670 H70 Z M75.5 662.5 L79.5 662.5 V670 H75.5" fill="none" stroke="#666" stroke-width="0.8"/><path d="M77 668 L80 663" stroke="#666" stroke-width="0.8"/>
<text x="91" y="668.5" font-size="9" fill="#222" textLength="68.5" lengthAdjust="spacingAndGlyphs" stroke="#222" stroke-width="0.2">русский (Украина)</text>
<path d="M172 663 Q176 660 179 663 M175.5 665 L179 669 M179 665 L175.5 669 M171.5 669 L174 664" stroke="#444" stroke-width="0.9" fill="none"/>
<text x="185" y="668.5" font-size="9" fill="#222" textLength="208.7" lengthAdjust="spacingAndGlyphs" stroke="#222" stroke-width="0.2">Специальные возможности: проверьте рекомендации</text>
<path d="M580 669 H586 M581 666.5 H585 M582 664 H584 M583 661.5 L581.5 663 M583 661.5 L584.5 663" stroke="#666" stroke-width="0.9" fill="none"/>
<text x="590.4" y="668.5" font-size="9" fill="#222" textLength="30.6" lengthAdjust="spacingAndGlyphs" stroke="#222" stroke-width="0.2">Заметки</text>
<path d="M635.5 660.5 H645.5 V667 H639.5 L637 669.5 V667 H635.5 Z" fill="#555"/>
<text x="647.6" y="668.5" font-size="9" fill="#222" textLength="48.4" lengthAdjust="spacingAndGlyphs" stroke="#222" stroke-width="0.2">Примечания</text>
<rect x="710" y="657.5" width="28.5" height="15.5" fill="#d5d5d5"/>
<rect x="719.5" y="660.5" width="10" height="8" fill="none" stroke="#555" stroke-width="0.8"/><path d="M722 663 H727" stroke="#555" stroke-width="0.8"/>
<g fill="none" stroke="#666" stroke-width="0.8"><rect x="748.5" y="660.5" width="3.5" height="3"/><rect x="753.5" y="660.5" width="3.5" height="3"/><rect x="748.5" y="666" width="3.5" height="3"/><rect x="753.5" y="666" width="3.5" height="3"/><path d="M776 661 H785 V669 H776 Z M780.5 661 V669"/><path d="M804 661 H814 M805 661 V666 H813 V661 M809 666 V669 M807 669 H811"/></g>
<path d="M827 665 H833 M837.5 665 H908.5 M911 665 H917 M914 662 V668" stroke="#777" stroke-width="0.8"/>
<rect x="859.5" y="661" width="3" height="8" fill="#444"/>
<path d="M873 663.5 V666.5" stroke="#777" stroke-width="0.8"/>
<text x="925.5" y="668.5" font-size="9" fill="#222" textLength="15.5" lengthAdjust="spacingAndGlyphs" stroke="#222" stroke-width="0.2">68%</text>
<g fill="none" stroke="#666" stroke-width="0.8"><rect x="950.5" y="660.5" width="8" height="8"/><path d="M952 662 L954 664 M957 662 L955 664 M952 667 L954 665 M957 667 L955 665"/></g>
<circle cx="24.3" cy="679.8" r="14.5" fill="#232323" opacity="0.88"/>
<path d="M20 684 L28 676 L30 678 L22 686 L19 687 Z" fill="none" stroke="#3ccf58" stroke-width="1.2"/>
<rect x="0" y="673" width="964" height="68" fill="#1a1a1a"/>
<clipPath id="pc"><rect x="0" y="673" width="60" height="20"/></clipPath><circle cx="24.3" cy="679.8" r="14.5" fill="#232323" clip-path="url(#pc)"/>
<path d="M19.5 684.5 L27.5 676.5 L29.5 678.5 L21.5 686.5 L19 687 Z" fill="none" stroke="#3ccf58" stroke-width="1.2"/>
<rect x="31" y="705" width="7" height="10.5" rx="3.5" fill="#c8c8c8"/>
<path d="M29 712 Q29 718 34.5 718 Q40 718 40 712 M34.5 718 V721 M31.5 721.5 H37.5" stroke="#c8c8c8" stroke-width="1.2" fill="none"/>
<path d="M26.5 722.5 L43.5 705" stroke="#e0403a" stroke-width="1.4"/>
<path d="M55.7 715.5 L58.5 712.7 L61.3 715.5" stroke="#cfcfcf" stroke-width="1" fill="none"/>
<text x="18.3" y="734.5" font-size="10.5" fill="#d6d6d6" textLength="31.7" lengthAdjust="spacingAndGlyphs" stroke="#d6d6d6" stroke-width="0.3">Unmute</text>
<rect x="95.5" y="708" width="12.5" height="10" rx="2" fill="#c8c8c8"/><path d="M108.5 711.5 L114 708.5 V717.5 L108.5 714.5 Z" fill="#c8c8c8"/>
<path d="M129.6 715.5 L132.4 712.7 L135.20000000000002 715.5" stroke="#cfcfcf" stroke-width="1" fill="none"/>
<text x="82.7" y="734.5" font-size="10.5" fill="#d6d6d6" textLength="43.8" lengthAdjust="spacingAndGlyphs" stroke="#d6d6d6" stroke-width="0.3">Stop Video</text>
<circle cx="350.5" cy="711" r="3" fill="#c8c8c8"/><circle cx="358" cy="711.5" r="2.8" fill="#c8c8c8"/>
<path d="M345 720.7 Q345 715.5 350.5 715.5 Q356 715.5 356 720.7 Z M353 720.7 Q353.5 716 358 716 Q363 716 363 720.7 Z" fill="#c8c8c8"/>
<text x="366.5" y="715.5" font-size="9" fill="#d6d6d6" textLength="8.3" lengthAdjust="spacingAndGlyphs">21</text>
<path d="M391.5 715.5 L394.3 712.7 L397.1 715.5" stroke="#cfcfcf" stroke-width="1" fill="none"/>
<text x="330.8" y="734.5" font-size="10.5" fill="#d6d6d6" textLength="46.5" lengthAdjust="spacingAndGlyphs" stroke="#d6d6d6" stroke-width="0.3">Participants</text>
<path d="M429.5 707.5 H444 V717 H434.5 L431 720.7 V717 H429.5 Z" fill="#c8c8c8"/>
<path d="M458.7 715.5 L461.5 712.7 L464.3 715.5" stroke="#cfcfcf" stroke-width="1" fill="none"/>
<text x="428" y="734.5" font-size="10.5" fill="#d6d6d6" textLength="18.1" lengthAdjust="spacingAndGlyphs" stroke="#d6d6d6" stroke-width="0.3">Chat</text>
<rect x="498.5" y="707.4" width="18.2" height="13" rx="2" fill="#27c24c"/>
<path d="M507.6 717.5 V711 M505 713.3 L507.6 710.5 L510.2 713.3" stroke="#062" stroke-width="1.3" fill="none"/>
<text x="481" y="734.5" font-size="10.5" fill="#35cf57" textLength="52" lengthAdjust="spacingAndGlyphs" stroke="#35cf57" stroke-width="0.3">Share Screen</text>
<circle cx="574.5" cy="713.8" r="7" fill="none" stroke="#c8c8c8" stroke-width="1.2"/><circle cx="574.5" cy="713.8" r="5.2" fill="#c8c8c8"/>
<text x="560" y="734.5" font-size="10.5" fill="#d6d6d6" textLength="28" lengthAdjust="spacingAndGlyphs" stroke="#d6d6d6" stroke-width="0.3">Record</text>
<circle cx="634.5" cy="714.5" r="6.5" fill="#c8c8c8"/><circle cx="632.5" cy="713" r="0.9" fill="#1a1a1a"/><circle cx="636.5" cy="713" r="0.9" fill="#1a1a1a"/><path d="M632 716 Q634.5 718.5 637 716" stroke="#1a1a1a" stroke-width="0.9" fill="none"/>
<path d="M641.5 706 V711 M639 708.5 H644" stroke="#c8c8c8" stroke-width="1.2"/>
<text x="615.7" y="734.5" font-size="10.5" fill="#d6d6d6" textLength="37.9" lengthAdjust="spacingAndGlyphs" stroke="#d6d6d6" stroke-width="0.3">Reactions</text>
<path d="M689.5 711.5 V708 H693 M698 708 H701.5 M689.5 716 V720.5 H693 M701.5 713 V720.5 H698" stroke="#c8c8c8" stroke-width="1.2" fill="none"/>
<circle cx="699.3" cy="709.5" r="1.8" fill="none" stroke="#c8c8c8" stroke-width="1.1"/><circle cx="691.5" cy="718" r="1.8" fill="none" stroke="#c8c8c8" stroke-width="1.1"/>
<text x="684.7" y="734.5" font-size="10.5" fill="#d6d6d6" textLength="20.3" lengthAdjust="spacingAndGlyphs" stroke="#d6d6d6" stroke-width="0.3">Apps</text>
<rect x="909.2" y="711.1" width="45.8" height="19.6" rx="4" fill="#d42d2d"/>
<text x="919.2" y="724.5" font-size="10" fill="#ffffff" font-weight="bold" textLength="24.4" lengthAdjust="spacingAndGlyphs">Leave</text>
<rect x="0" y="741" width="964" height="31" fill="#1e2a3a"/>
<rect x="517" y="741" width="37" height="31" fill="#3a4250"/>
<g fill="#ffffff"><rect x="12" y="750" width="5.8" height="5.5"/><rect x="18.8" y="750" width="5.8" height="5.5"/><rect x="12" y="756.5" width="5.8" height="5.5"/><rect x="18.8" y="756.5" width="5.8" height="5.5"/></g>
<circle cx="56" cy="753.5" r="4" fill="none" stroke="#fff" stroke-width="1.1"/><path d="M53 756.5 L48.5 761" stroke="#fff" stroke-width="1.2"/>
<g fill="none" stroke="#fff" stroke-width="1"><rect x="85.5" y="752" width="7" height="7.5"/><path d="M84 750 H94 M84 761.5 H94 M95.5 752 V759.5"/></g>
<path d="M120 752 L129 747.5 L138 752 V758 L129 763 L120 758 Z" fill="#2a82d8"/><path d="M122 753 H136 M122 756 H136" stroke="#cde" stroke-width="1" stroke-dasharray="2 1"/>
<path d="M158 756 L164 752 H172 L174 755 V761 L166 764 L158 761 Z" fill="#a8a8a8"/><path d="M163 752 L166 747 L173 748 L171 753 Z" fill="#e8e8e8"/>
<path d="M194.5 749 H201 L203 751 H210.5 V763 H194.5 Z" fill="#f0b52e"/><rect x="194.5" y="754" width="16" height="9" fill="#fcd15a"/><rect x="199" y="757" width="7" height="3" fill="#3a8ee0"/>
<circle cx="239.5" cy="756" r="8.5" fill="#f46a2a"/><circle cx="240.5" cy="756.5" r="5" fill="#7a3fd0"/><path d="M232 752 Q236 746 244 748 Q238 750 240 753 Z" fill="#ffb330"/>
<ellipse cx="276.5" cy="756" rx="8.5" ry="9" fill="#e0202a"/><ellipse cx="276.5" cy="756" rx="3.5" ry="6.5" fill="#1e2a3a"/>
<rect x="261" y="769.5" width="30" height="1.5" fill="#8aa0c0"/>
<circle cx="313" cy="756" r="9" fill="#e33b2e"/><path d="M313 756 L305.2 760.5 A9 9 0 0 1 313 747 Z" fill="#e33b2e"/><path d="M313 756 L320.8 760.5 A9 9 0 0 1 305.2 760.5 Z" fill="#2aa04a"/><path d="M313 747 A9 9 0 0 1 320.8 760.5 L313 756 Z" fill="#f8c21a"/><circle cx="313" cy="756" r="4" fill="#fff"/><circle cx="313" cy="756" r="3" fill="#3b7de8"/>
<rect x="298" y="769.5" width="29" height="1.5" fill="#8aa0c0"/>
<circle cx="350" cy="756" r="8.5" fill="#2a9fd8"/><path d="M345 756 L355 751.5 L353 761 L350 758 Z" fill="#fff"/>
<path d="M379 750 Q379 747 383 747 H392 Q396 747 396 751 V759 Q396 763 392 763 H386 L382 766 V763 Q379 762 379 759 Z" fill="#8a62d8"/><path d="M384.5 752 Q384.5 758 391 758.5" stroke="#fff" stroke-width="1.6" fill="none"/>
<circle cx="424.5" cy="756" r="8.5" fill="#1ea0e8"/>
<text x="420.5" y="760.5" font-size="12" fill="#ffffff" font-weight="bold" textLength="8" lengthAdjust="spacingAndGlyphs">S</text>
<rect x="451" y="750" width="11" height="11" rx="1.5" fill="#5a5fc8"/><circle cx="466" cy="751" r="2.5" fill="#7b83eb"/><rect x="463" y="754" width="6.5" height="7" rx="2" fill="#7b83eb"/>
<text x="453.5" y="759.5" font-size="9" fill="#ffffff" font-weight="bold" textLength="6" lengthAdjust="spacingAndGlyphs">T</text>
<rect x="493" y="748" width="14" height="15" rx="1" fill="#e8eef8"/><path d="M497 752 H505 M497 755 H505 M497 758 H505" stroke="#2b5bb0" stroke-width="1"/><rect x="488.5" y="750.5" width="10" height="10" fill="#2b5bb0"/>
<text x="489.8" y="758.8" font-size="8" fill="#ffffff" font-weight="bold" textLength="7.5" lengthAdjust="spacingAndGlyphs">W</text>
<rect x="483" y="769.5" width="29" height="1.5" fill="#8aa0c0"/>
<circle cx="534.5" cy="755.5" r="9.5" fill="#2d8cff"/>
<text x="529" y="757" font-size="4" fill="#ffffff" textLength="11" lengthAdjust="spacingAndGlyphs">zoom</text>
<rect x="517" y="769.5" width="37" height="1.5" fill="#8aa0c0"/>
<path d="M682 761 Q679 761 679.5 758 Q680 755 683 755.5 Q684 751 688.5 751 Q693 751 694 755.5 Q697 755.5 697 758.5 Q697 761 694 761 Z" fill="#cfe0f2"/>
<circle cx="693.5" cy="750" r="2" fill="#e84a3a"/>
<text x="703" y="760.5" font-size="11" fill="#ffffff" textLength="21.2" lengthAdjust="spacingAndGlyphs">10°C</text>
<path d="M743.5 758 L747.8 753.7 L752 758" stroke="#fff" stroke-width="1" fill="none"/>
<g fill="none" stroke="#fff" stroke-width="0.9"><rect x="763" y="751" width="6" height="9" rx="1"/><rect x="765" y="753" width="6" height="6"/></g>
<rect x="781" y="749" width="5" height="9" rx="2.5" fill="#fff"/><path d="M779.5 756 Q779.5 761 783.5 761 Q787.5 761 787.5 756 M783.5 761 V763" stroke="#fff" stroke-width="0.9" fill="none"/>
<rect x="796.5" y="751.5" width="11" height="9" fill="none" stroke="#fff" stroke-width="0.9"/><path d="M799 758 L802 754 L804 756" stroke="#fff" stroke-width="0.9" fill="none"/><circle cx="806" cy="761" r="2.3" fill="#f5a623"/>
<g fill="none" stroke="#fff" stroke-width="0.9"><rect x="815" y="751" width="10" height="7"/><path d="M820 758 V761 M817 761 H823"/></g>
<path d="M832 754 H834 L837 751 V761 L834 758 H832 Z" fill="none" stroke="#fff" stroke-width="0.9"/><path d="M839 753.5 Q840.5 756 839 758.5 M841 752 Q843.5 756 841 760" stroke="#fff" stroke-width="0.8" fill="none"/>
<text x="852.4" y="760" font-size="10" fill="#ffffff" textLength="16.2" lengthAdjust="spacingAndGlyphs">РУС</text>
<text x="889" y="753" font-size="10" fill="#ffffff" textLength="19.3" lengthAdjust="spacingAndGlyphs">13:51</text>
<text x="879.8" y="766" font-size="10" fill="#ffffff" textLength="39.4" lengthAdjust="spacingAndGlyphs">16.03.2023</text>
<path d="M933.5 749 H947 V759 H941 L938 762 V759 H933.5 Z" fill="#fff"/><path d="M936 752 H944 M936 754.5 H944 M936 757 H941" stroke="#1e2a3a" stroke-width="0.8"/>
<circle cx="944.5" cy="761.5" r="4.5" fill="#1e2a3a" stroke="#fff" stroke-width="0.9"/>
<text x="942.8" y="764.5" font-size="7" fill="#ffffff" font-weight="bold" textLength="3.5" lengthAdjust="spacingAndGlyphs">1</text>
<rect x="959.5" y="742" width="1" height="30" fill="#6a7080"/>
</svg>
</body></html>
